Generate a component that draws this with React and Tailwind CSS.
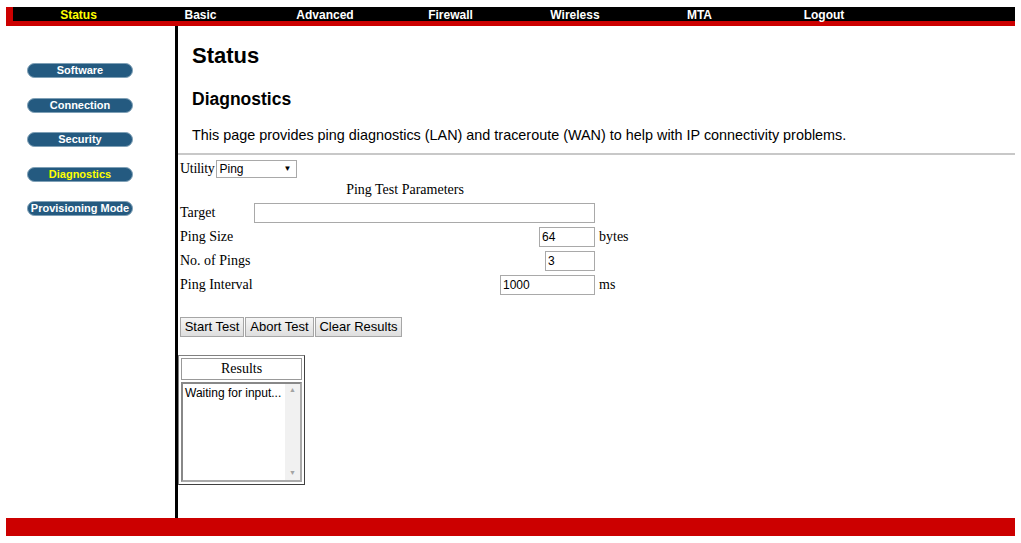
const navItems = [
  { label: 'Status', w: 'w-[121px]', active: true },
  { label: 'Basic', w: 'w-[123px]' },
  { label: 'Advanced', w: 'w-[126px]' },
  { label: 'Firewall', w: 'w-[125px]' },
  { label: 'Wireless', w: 'w-[124px]' },
  { label: 'MTA', w: 'w-[125px]' },
  { label: 'Logout', w: 'w-[124px]' },
];

const sideItems = [
  { label: 'Software' },
  { label: 'Connection' },
  { label: 'Security' },
  { label: 'Diagnostics', active: true },
  { label: 'Provisioning Mode' },
];

const TextBox = ({ value, w }) => (
  <input
    readOnly
    value={value}
    className={`${w} h-[20px] border border-[#a9a9a9] bg-white px-[2px] text-[12px] text-black outline-none`}
    style={{ fontFamily: '"Liberation Sans", Arial, sans-serif' }}
  />
);

const Btn = ({ children, w }) => (
  <button
    className={`${w} h-[20px] border border-[#a6a6a6] bg-gradient-to-b from-[#f6f6f6] to-[#dedede] text-[13px] text-black`}
    style={{ fontFamily: '"Liberation Sans", Arial, sans-serif' }}
  >
    {children}
  </button>
);

export default function App() {
  return (
    <div className="min-h-[543px] bg-white px-[6px] pt-[7px]" style={{ fontFamily: '"Liberation Sans", Arial, sans-serif' }}>
      {/* top nav */}
      <div className="border-l-[7px] border-[#cc0000]">
        <div className="flex h-[14px] bg-black pl-[5px] pt-[1px] text-[12px] font-bold leading-[14px]">
          {navItems.map((n) => (
            <div key={n.label} className={`${n.w} text-center ${n.active ? 'text-[#ffff00]' : 'text-white'}`}>
              {n.label}
            </div>
          ))}
        </div>
      </div>
      <div className="h-[5px] bg-[#cc0000]" />

      {/* body */}
      <div className="flex h-[492px]">
        <div className="w-[172px] shrink-0 border-r-[3px] border-black pl-[21px] pt-[37px]">
          <div className="flex flex-col gap-[19.5px]">
            {sideItems.map((s) => (
              <div
                key={s.label}
                className={`flex h-[15px] w-[106px] items-center justify-center rounded-full border border-[#7fa0b6] bg-[#245a80] text-[11px] font-bold leading-none ${s.active ? 'text-[#ffff00]' : 'text-white'}`}
              >
                {s.label}
              </div>
            ))}
          </div>
        </div>

        <div className="flex-1">
          <div className="pl-[14px]">
            <h1 className="pt-[17px] text-[22px] font-bold leading-[26px] text-black">Status</h1>
            <h2 className="pt-[20px] text-[17.5px] font-bold leading-[20px] text-black">Diagnostics</h2>
            <p className="pt-[18px] text-[14.4px] leading-[16px] text-black">
              This page provides ping diagnostics (LAN) and traceroute (WAN) to help with IP connectivity problems.
            </p>
          </div>
          <div className="mt-[10px] h-[2px] bg-[#c8c8c8]" />

          <div className="pl-[2px] text-[14px] leading-[16px] text-black" style={{ fontFamily: '"Liberation Serif", "Times New Roman", serif' }}>
            <div className="flex h-[23px] items-center gap-[2px] pt-[4px]">
              <span className="tracking-[-0.3px]">Utility</span>
              <div
                className="flex h-[18px] w-[81px] items-center justify-between border border-[#a9a9a9] bg-white pl-[2px] pr-[5px] text-[12px]"
                style={{ fontFamily: '"Liberation Sans", Arial, sans-serif' }}
              >
                <span>Ping</span>
                <span className="text-[8px]">▼</span>
              </div>
            </div>

            <div className="w-[450px]">
              <div className="flex h-[24px] items-center justify-center">Ping Test Parameters</div>
              <div className="grid grid-cols-[74px_341px_auto] items-center gap-y-[4px] pt-[1px]">
                <span>Target</span>
                <div className="flex justify-end"><TextBox value="" w="w-[341px]" /></div>
                <span />
                <span>Ping Size</span>
                <div className="flex justify-end"><TextBox value="64" w="w-[56px]" /></div>
                <span className="pl-[4px]">bytes</span>
                <span>No. of Pings</span>
                <div className="flex justify-end"><TextBox value="3" w="w-[50px]" /></div>
                <span />
                <span>Ping Interval</span>
                <div className="flex justify-end"><TextBox value="1000" w="w-[95px]" /></div>
                <span className="pl-[4px]">ms</span>
              </div>
            </div>

            <div className="mt-[22px] flex gap-[1px]">
              <Btn w="w-[64px]">Start Test</Btn>
              <Btn w="w-[69px]">Abort Test</Btn>
              <Btn w="w-[87px]">Clear Results</Btn>
            </div>

            <div className="-ml-[2px] mt-[18px] flex w-[127px] flex-col gap-[2px] border border-[#808080] border-b-[#404040] border-r-[#404040] p-[2px]">
              <div className="flex h-[22px] items-center justify-center border border-[#999]">Results</div>
              <div className="flex h-[100px] border-2 border-[#aaa] border-t-[#888] border-l-[#888] bg-white">
                <div className="flex-1 pl-[2px] pt-[2px] text-[12px] leading-[14px]" style={{ fontFamily: '"Liberation Sans", Arial, sans-serif' }}>
                  Waiting for input...
                </div>
                <div className="flex w-[15px] flex-col items-center justify-between bg-[#f1f1f1] py-[3px] text-[7px] leading-none text-[#a3a3a3]">
                  <span>▲</span>
                  <span>▼</span>
                </div>
              </div>
            </div>
          </div>
        </div>
      </div>

      <div className="h-[18px] bg-[#cc0000]" />
    </div>
  );
}
